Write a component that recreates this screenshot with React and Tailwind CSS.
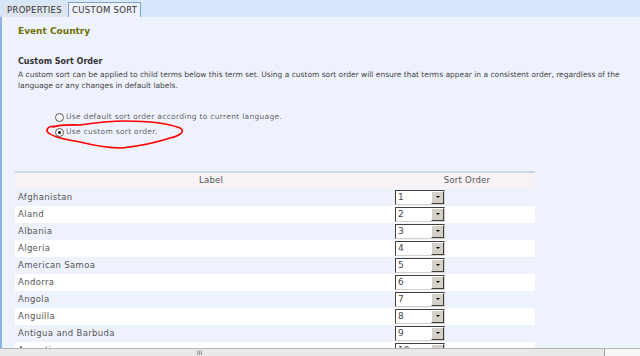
import React from 'react';

const countries = [
  'Afghanistan',
  'Aland',
  'Albania',
  'Algeria',
  'American Samoa',
  'Andorra',
  'Angola',
  'Anguilla',
  'Antigua and Barbuda',
  'Argentina',
];

const SortSelect = ({ value }) => (
  <div className="flex h-[15px] w-[50px] border border-t-[#404040] border-l-[#404040] border-r-[#d4d0c8] border-b-[#d4d0c8] bg-white">
    <span className="flex-1 pl-[2px] text-[9px] leading-[13px] text-[#444]">{value}</span>
    <span className="flex h-[13px] w-[13px] items-center justify-center border border-t-white border-l-white border-r-[#404040] border-b-[#404040] bg-[#d4d0c8]">
      <span className="h-0 w-0 border-x-[2px] border-t-[2px] border-x-transparent border-t-black" />
    </span>
  </div>
);

const Radio = ({ checked, label }) => (
  <div className="flex h-[15px] items-center gap-[2px]">
    <span className="flex h-[9px] w-[9px] items-center justify-center rounded-full border border-[#555] bg-white">
      {checked && <span className="h-[3px] w-[3px] rounded-full bg-black" />}
    </span>
    <span className="text-[7.5px] tracking-[0.3px] text-[#666]">{label}</span>
  </div>
);

export default function App() {
  return (
    <div
      className="relative flex h-[356px] w-[640px] flex-col overflow-hidden bg-[#eef2fd]"
      style={{ fontFamily: '"DejaVu Sans", Verdana, sans-serif' }}
    >
      {/* tab strip */}
      <div className="flex h-[17px] items-end bg-[#d6e7fb] pl-[3px] pt-[3px]">
        <div className="flex h-[14px] items-center bg-[#dde4ee] px-[4px] text-[8.5px] tracking-[0.3px] text-[#333]">PROPERTIES</div>
        <div className="ml-[2px] flex h-[15px] items-center border border-b-0 border-[#7da2ce] bg-[#eef2fd] px-[3px] text-[8.5px] tracking-[0.3px] text-[#333]">
          CUSTOM SORT
        </div>
      </div>

      <div className="flex flex-1 flex-col overflow-hidden border-l-2 border-[#8db3e6] pl-[16px] pr-[4px]">
        <div className="mt-[8px] text-[9px] font-bold text-[#707000]">Event Country</div>

        <div className="mt-[17px] text-[8px] font-bold text-[#333]">Custom Sort Order</div>
        <div className="mt-[1px] text-[7.5px] leading-[11px] text-[#444]">
          A custom sort can be applied to child terms below this term set. Using a custom sort order will ensure that terms appear in a consistent order, regardless of the language or any changes in default labels.
        </div>

        <div className="ml-[37px] mt-[19px] flex flex-col">
          <Radio label="Use default sort order according to current language." />
          <Radio checked label="Use custom sort order." />
        </div>

        {/* table */}
        <div className="-ml-[3px] mt-[31px] w-[520px] border-t-2 border-[#c9d7e6]">
          <div className="grid h-[16px] grid-cols-[380px_1fr] items-center bg-[#f6f2f6] text-[8.5px] tracking-[0.2px] text-[#555]">
            <span className="pl-[12px] text-center">Label</span>
            <span className="pl-[4px] text-center">Sort Order</span>
          </div>
          {countries.map((name, i) => (
            <div
              key={name}
              className={`grid h-[17px] grid-cols-[380px_1fr] items-center ${i % 2 ? 'bg-white' : 'bg-[#eef2fd]'}`}
            >
              <span className="pl-[3px] text-[8.5px] tracking-[0.35px] text-[#555]">{name}</span>
              <SortSelect value={i + 1} />
            </div>
          ))}
        </div>
      </div>

      {/* horizontal scrollbar */}
      <div className="flex h-[8px] border-t border-[#b5b5b5] bg-[#f2f2f2]">
        <div className="flex w-[605px] items-center justify-center border-r border-[#999] bg-[#e9e9e9] pr-[205px]">
          <span className="text-[6px] leading-[6px] text-[#555]">III</span>
        </div>
        <div className="flex-1 bg-[#f6f6f6]" />
      </div>

      {/* hand-drawn highlight */}
      <svg className="pointer-events-none absolute left-0 top-0" width="640" height="356">
        <path
          d="M53 127 C62 124 72 125 80 125 C100 122 115 121 125 121 C145 121 165 122 180 128 C186 131 180 136 170 138 C155 143 140 146 122 148 C105 148 92 145 80 142 C70 140 62 139 57 137 C48 134 45 131 48 128 C50 126 54 126 58 126"
          fill="none"
          stroke="#ff0000"
          strokeWidth="1.6"
          strokeLinecap="round"
        />
      </svg>
    </div>
  );
}
